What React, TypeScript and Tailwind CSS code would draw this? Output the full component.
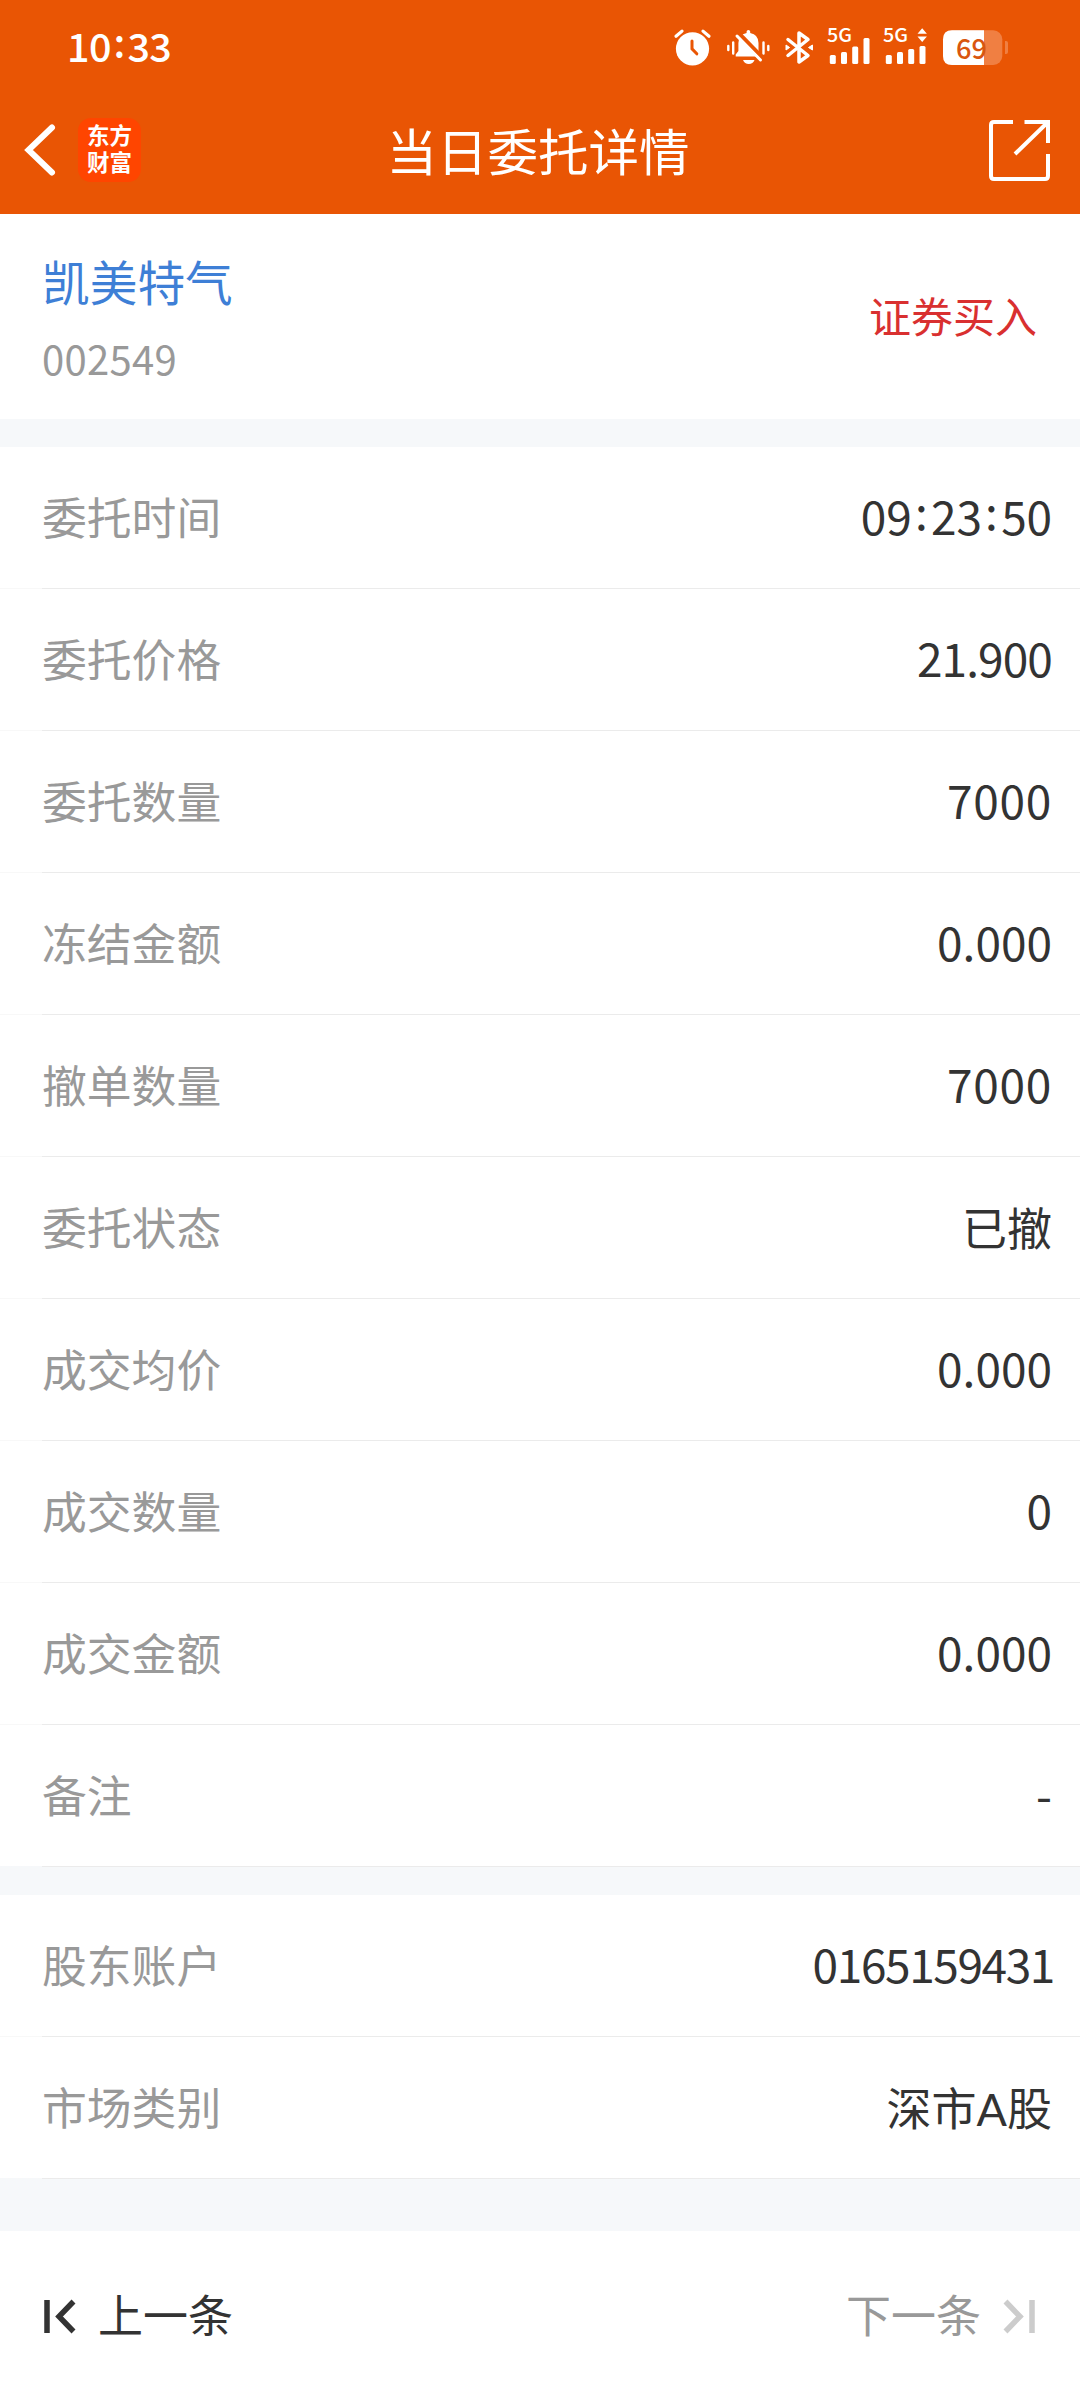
import React from "react";

type Item = { label: string; value: string; spacing?: string };

const orderRows: Item[] = [
  { label: "委托时间", value: "09:23:50", spacing: "tracking-[-0.1px]" },
  { label: "委托价格", value: "21.900", spacing: "tracking-[-0.9px]" },
  { label: "委托数量", value: "7000", spacing: "tracking-[0.7px]" },
  { label: "冻结金额", value: "0.000", spacing: "tracking-[0px]" },
  { label: "撤单数量", value: "7000", spacing: "tracking-[0.7px]" },
  { label: "委托状态", value: "已撤" },
  { label: "成交均价", value: "0.000", spacing: "tracking-[0px]" },
  { label: "成交数量", value: "0" },
  { label: "成交金额", value: "0.000", spacing: "tracking-[0px]" },
  { label: "备注", value: "-" },
];

const accountRows: Item[] = [
  { label: "股东账户", value: "0165159431", spacing: "tracking-[-1.4px] -mr-[2px]" },
  { label: "市场类别", value: "深市A股" },
];

/* Digits with the colon raised to the middle of the figure height. */
function Digits({ text }: { text: string }) {
  return (
    <>
      {text.split("").map((c, i) =>
        c === ":" ? (
          <span key={i} className="relative -top-[0.1em] inline-block w-[0.42em] text-center">
            :
          </span>
        ) : (
          <React.Fragment key={i}>{c}</React.Fragment>
        ),
      )}
    </>
  );
}

function Row({ label, value, spacing, last }: Item & { last: boolean }) {
  return (
    <div className="flex h-[142px] flex-col">
      <div className="flex h-[141px] items-center justify-between pr-[28px] pl-[42px]">
        <span className="pb-[3px] text-[44.8px] leading-[64px] text-[#999]">{label}</span>
        {/[\u4e00-\u9fff]/.test(value) ? (
          <span className="pt-[3px] font-['Lato','Noto_Sans_CJK_SC',sans-serif] text-[45px] leading-[64px] text-[#333]">
            {value}
          </span>
        ) : (
          <span className={`pb-[6px] text-[46px] leading-[64px] text-[#333] ${spacing ?? ""}`}>
            <Digits text={value} />
          </span>
        )}
      </div>
      <div className="flex h-px">
        <div className={`w-[42px] ${last ? "bg-[#f6f8fa]" : "bg-[#f8f8f8]"}`} />
        <div className="flex-1 bg-[#ebebeb]" />
      </div>
    </div>
  );
}

function Rows({ items }: { items: Item[] }) {
  return (
    <section>
      {items.map((r, i) => (
        <Row key={r.label} {...r} last={i === items.length - 1} />
      ))}
    </section>
  );
}

function AlarmIcon() {
  return (
    <svg className="h-[40px] w-[40px]" viewBox="672 28 40 40" fill="none">
      <circle cx="692.5" cy="48.8" r="16.6" fill="#fff" />
      <path d="M676 36.3l6-5.2M703 31.1l6 5.2" stroke="#fff" strokeWidth="3.2" strokeLinecap="round" />
      <path d="M692 41v7.8l4.8 5" stroke="#e95504" strokeWidth="3" strokeLinecap="round" />
    </svg>
  );
}

function MuteIcon() {
  return (
    <svg className="ml-[14px] h-[40px] w-[46px]" viewBox="726 28 46 40" fill="none">
      <path
        d="M746.6 33v-1.5q0-1.5 1.8-1.5t1.8 1.5v1.5q8.3 1.6 8.3 10v8.5l3.2 5H735.7v-2l2.7-3.5V43q0-8.4 8.2-10z"
        fill="#fff"
      />
      <path d="M743 60h11.5q-1.5 4-5.7 4t-5.8-4z" fill="#fff" />
      <path d="M728.3 46v4M733.2 42.5v11M763.5 42.5v11M768.3 46v4" stroke="#fff" strokeWidth="2.4" strokeLinecap="round" />
      <path d="M739 33.5l24.5 25" stroke="#e95504" strokeWidth="4" />
      <path d="M737 36l23.5 24" stroke="#fff" strokeWidth="3" strokeLinecap="round" />
    </svg>
  );
}

function BluetoothIcon() {
  return (
    <svg className="ml-[12px] h-[40px] w-[30px]" viewBox="784 28 30 40" fill="none">
      <path d="M788 39.5l20 16-9 6.5V33l9 6.5L788 55.5" stroke="#fff" strokeWidth="3.5" strokeLinejoin="round" strokeLinecap="round" />
      <path d="M786 45l3.6 2.5-3.6 2.5zM812.5 45l-4 2.5 4 2.5z" fill="#fff" stroke="#fff" />
    </svg>
  );
}

function SignalIcon({ arrows }: { arrows?: boolean }) {
  return (
    <svg className="ml-[12px] h-[44px] w-[44px] overflow-visible" viewBox="826 26 44 44">
      <text
        x="827"
        y="42"
        fill="#fff"
        fontFamily="Noto Sans CJK SC"
        fontWeight="500"
        fontSize="19"
        textLength="25"
        lengthAdjust="spacingAndGlyphs"
      >
        5G
      </text>
      <g fill="#fff">
        <rect x="829.8" y="55" width="6" height="9" rx="1.5" />
        <rect x="841" y="52" width="6" height="12" rx="1.5" />
        <rect x="852.2" y={arrows ? 49 : 46.5} width="6" height={arrows ? 15 : 17.5} rx="1.5" />
        <rect x="863.5" y={arrows ? 46 : 38} width="6" height={arrows ? 18 : 26} rx="1.5" />
        {arrows && <path d="M861.5 33.8l4.7-5.5 4.7 5.5zM861.5 36.5l4.7 5.5 4.7-5.5z" />}
      </g>
    </svg>
  );
}

function BatteryIcon() {
  return (
    <svg className="ml-[16px] h-[40px] w-[68px]" viewBox="942 28 68 40">
      <rect x="943" y="30.3" width="59.3" height="34.7" rx="9" fill="#f07f42" />
      <path d="M952 30.3h32V65h-32q-9 0-9-9V39.3q0-9 9-9z" fill="#fff" />
      <path d="M1005 41h1q2 0 2 2v9q0 2-2 2h-1z" fill="#f07f42" />
      <text
        x="956"
        y="58.5"
        fill="#d9560f"
        fontFamily="Noto Sans CJK SC"
        fontWeight="500"
        fontSize="28"
        textLength="31"
        lengthAdjust="spacingAndGlyphs"
      >
        69
      </text>
    </svg>
  );
}

export default function App() {
  return (
    <main className="h-[2400px] w-[1080px] overflow-hidden bg-white font-['Noto_Sans_CJK_SC',sans-serif]">
      <header className="flex h-[214px] flex-col bg-[#e95504] text-white">
        <div className="flex h-[96px] items-center justify-between pr-[70px] pl-[67px]">
          <span className="pb-[6px] text-[39.5px] leading-[56px] font-medium tracking-[-0.6px]">
            <Digits text="10:33" />
          </span>
          <div className="flex items-center">
            <AlarmIcon />
            <MuteIcon />
            <BluetoothIcon />
            <SignalIcon />
            <SignalIcon arrows />
            <BatteryIcon />
          </div>
        </div>
        <div className="grid h-[108px] grid-cols-[1fr_auto_1fr] items-center pr-[30px] pl-[24px]">
          <div className="flex items-center">
            <svg className="h-[54px] w-[34px]" viewBox="24 123 34 54" fill="none">
              <path d="M52 127.5L28.5 150l23.5 22.5" stroke="#fff" strokeWidth="6" strokeLinecap="round" />
            </svg>
            <div className="ml-[20px] flex h-[64px] w-[63px] flex-col items-center justify-center rounded-[13px] bg-[#ff4500] pb-[2px] font-['Lato','Noto_Sans_CJK_SC',sans-serif] text-[22.5px] leading-[27px] font-bold">
              <span>东方</span>
              <span>财富</span>
            </div>
          </div>
          <h1 className="pb-[3px] pl-[2px] text-[50.5px] leading-[70px]">当日委托详情</h1>
          <svg className="h-[62px] w-[62px] justify-self-end" viewBox="989 120 62 62" fill="none" stroke="#fff" strokeWidth="4">
            <path d="M1014 123h-19q-3 0-3 3v51q0 3 3 3h51q3 0 3-3v-22M1025.5 123h23.5v21M1048 124l-32 31" />
          </svg>
        </div>
      </header>

      <section className="flex h-[205px] items-center justify-between pr-[43px] pl-[42px]">
        <div className="flex flex-col pt-[1px]">
          <span className="text-[47.7px] leading-[64px] text-[#3e7fd6]">凯美特气</span>
          <span className="mt-[17px] text-[40px] leading-[56px] tracking-[0.3px] text-[#999]">002549</span>
        </div>
        <span className="pb-[3px] text-[42px] leading-[60px] text-[#d93030]">证券买入</span>
      </section>

      <div className="h-[28px] bg-[#f6f8fa]" />
      <Rows items={orderRows} />
      <div className="h-[28px] bg-[#f6f8fa]" />
      <Rows items={accountRows} />
      <div className="h-[52px] bg-[#f6f8fa]" />

      <footer className="flex h-[169px] items-center justify-between px-[43px] text-[45px] leading-[64px]">
        <button className="flex items-center text-[#333]">
          <svg className="h-[36px] w-[34px]" viewBox="43 2297 34 36" fill="none" stroke="currentColor" strokeWidth="5.5">
            <path d="M47 2299v33M73.5 2300.5L59 2315.5l14.5 15" />
          </svg>
          <span className="ml-[21px] pb-[3px]">上一条</span>
        </button>
        <button className="flex items-center text-[#999]">
          <span className="pb-[3px]">下一条</span>
          <svg className="ml-[22px] h-[36px] w-[34px] text-[#ccc]" viewBox="1003 2297 34 36" fill="none" stroke="currentColor" strokeWidth="5.5">
            <path d="M1032 2299v33M1005.5 2300.5L1020 2315.5l-14.5 15" />
          </svg>
        </button>
      </footer>
    </main>
  );
}
